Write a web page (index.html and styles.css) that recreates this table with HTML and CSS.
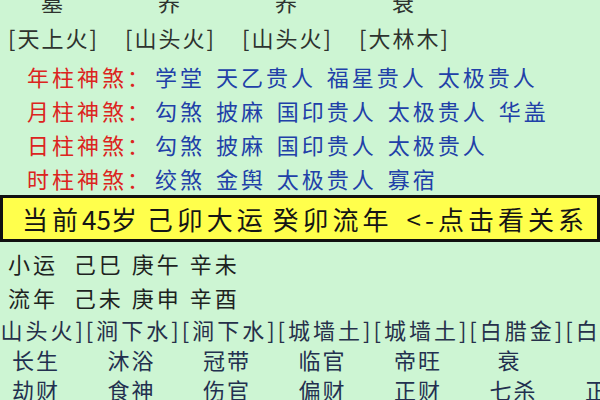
FILE: index.html
```html
<!DOCTYPE html>
<html lang="zh-CN">
<head>
<meta charset="utf-8">
<link rel="stylesheet" href="styles.css">
</head>
<body>
<div class="page">
  <div class="cols top">
    <span>墓</span><span>养</span><span>养</span><span>衰</span>
  </div>
  <div class="cols nayin">
    <span>[天上火]</span><span>[山头火]</span><span>[山头火]</span><span>[大林木]</span>
  </div>
  <div class="shensha first"><span class="lbl">年柱神煞：</span><span class="val">学堂 天乙贵人 福星贵人 太极贵人</span></div>
  <div class="shensha"><span class="lbl">月柱神煞：</span><span class="val">勾煞 披麻 国印贵人 太极贵人 华盖</span></div>
  <div class="shensha"><span class="lbl">日柱神煞：</span><span class="val">勾煞 披麻 国印贵人 太极贵人</span></div>
  <div class="shensha"><span class="lbl">时柱神煞：</span><span class="val">绞煞 金舆 太极贵人 寡宿</span></div>
  <div class="bar">当前<span class="num">45</span>岁 己卯大运 癸卯流年<span class="gap"></span>&lt;-点击看关系</div>
  <div class="plain first">小运&nbsp; 己巳 庚午 辛未</div>
  <div class="plain">流年&nbsp; 己未 庚申 辛酉</div>
  <div class="nayin2">[山头火][涧下水][涧下水][城墙土][城墙土][白腊金][白腊金]</div>
  <div class="grid">
    <span>长生</span><span>沐浴</span><span>冠带</span><span>临官</span><span>帝旺</span><span class="indent">衰</span>
  </div>
  <div class="grid">
    <span>劫财</span><span>食神</span><span>伤官</span><span>偏财</span><span>正财</span><span>七杀</span><span>正官</span>
  </div>
</div>
</body>
</html>
```
FILE: styles.css
```css
html, body {
  margin: 0;
  padding: 0;
  width: 600px;
  height: 400px;
  overflow: hidden;
  background: #cdf5d3;
  font-family: "Noto Sans CJK SC", "DejaVu Sans", sans-serif;
}
.page {
  margin-top: -16px;
  white-space: nowrap;
}
.cols {
  display: grid;
  grid-template-columns: repeat(4, 90px);
  column-gap: 27px;
  padding-left: 8px;
  font-size: 22px;
  letter-spacing: 2px;
  color: #2e332f;
}
.top {
  line-height: 35px;
}
.top span {
  text-align: center;
}
.nayin {
  line-height: 36px;
}
.shensha {
  padding-left: 27px;
  font-size: 22px;
  letter-spacing: 3px;
  line-height: 34px;
  display: flex;
}
.shensha.first {
  padding-top: 4px;
}
.lbl {
  color: #dc2420;
  width: 128px;
  flex: none;
}
.val {
  color: #2140a8;
  word-spacing: 3px;
}
.bar {
  background: #ffff4c;
  border: 3px solid #111;
  height: 41px;
  line-height: 41px;
  padding-left: 19px;
  font-size: 26px;
  letter-spacing: 4px;
  word-spacing: -4px;
  color: #151515;
}
.num {
  letter-spacing: 0;
}
.gap {
  display: inline-block;
  width: 14px;
}
.plain {
  padding-left: 8px;
  font-size: 22px;
  letter-spacing: 3px;
  line-height: 34px;
  color: #1d231f;
}
.plain.first {
  margin-top: 4px;
}
.nayin2 {
  margin-left: -10px;
  font-size: 22px;
  letter-spacing: 3px;
  line-height: 30px;
  color: #26304a;
}
.grid {
  display: grid;
  grid-template-columns: repeat(7, 95.5px);
  padding-left: 12px;
  font-size: 22px;
  letter-spacing: 2px;
  line-height: 30px;
  color: #23304f;
}
.indent {
  padding-left: 8px;
}
```
